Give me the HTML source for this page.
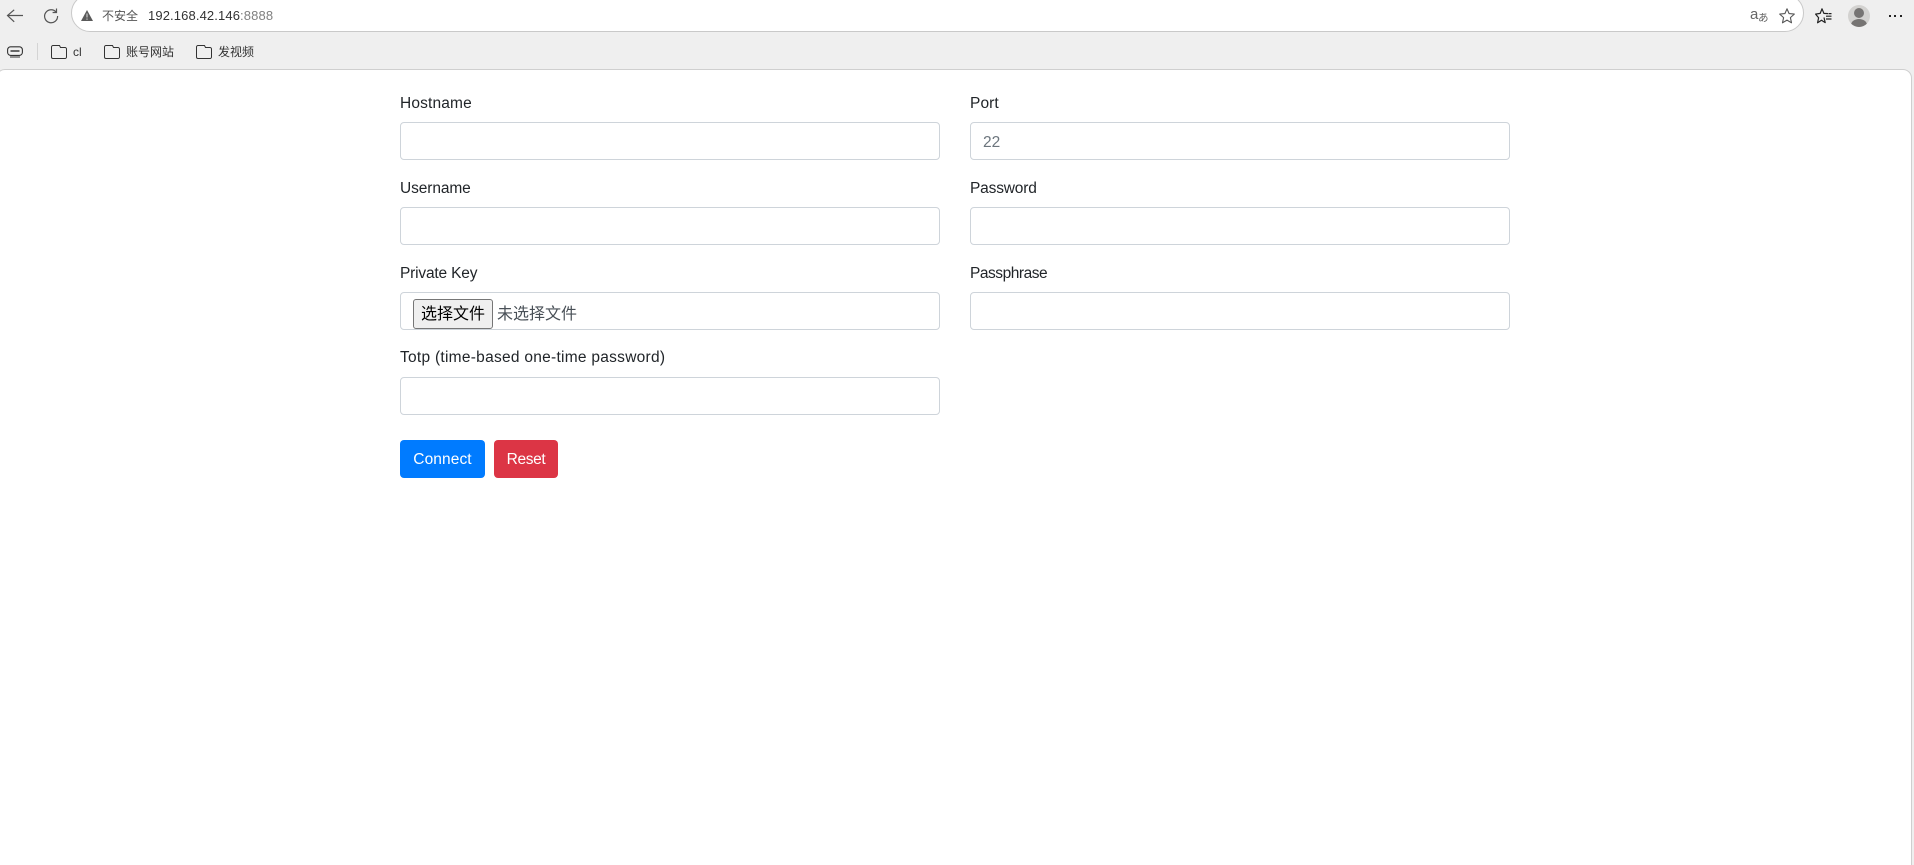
<!DOCTYPE html>
<html lang="zh">
<head>
<meta charset="utf-8">
<title>WebSSH</title>
<style>
html,body{margin:0;padding:0;width:1914px;height:865px;overflow:hidden;background:#efefef;}
body{position:relative;font-family:"Liberation Sans","Noto Sans CJK SC",sans-serif;color:#212529;}
.abs,.lb,.in,.t{position:absolute;}
#pill{position:absolute;left:71px;top:-6px;width:1731px;height:36px;background:#fff;border:1px solid #c9c9c9;border-radius:19px;}
#page{position:absolute;left:-4px;top:69px;width:1914px;height:800px;background:#fff;border:1px solid #cfcfcf;border-radius:9px 9px 0 0;}
.lb{font-size:15.5px;line-height:24px;color:#212529;white-space:nowrap;}
.in{width:538px;height:36px;background:#fff;border:1px solid #ced4da;border-radius:4px;}
.t{white-space:nowrap;color:#333;}
.btn{position:absolute;top:440px;height:38px;border-radius:4px;color:#fff;font-size:15.5px;line-height:39px;text-align:center;}
svg{position:absolute;overflow:visible;}
</style>
</head>
<body>
<div id="pill"></div>
<div id="page"></div>

<!-- back -->
<svg style="left:0;top:-1px" width="30" height="30" viewBox="0 0 30 30" fill="none" stroke="#555" stroke-width="1.2"><path d="M7.5 16.5H23M14.2 10.8L7.5 16.5L14.2 22.8"/></svg>
<!-- reload -->
<svg style="left:43px;top:7px" width="16" height="16" viewBox="0 0 16 16" fill="none" stroke="#555" stroke-width="1.2"><path d="M13.5 1.5V5.5H9.6M13.2 5.2A6.5 6.5 0 1 0 14.6 9"/></svg>
<!-- warning -->
<svg style="left:81px;top:10px" width="12" height="11" viewBox="0 0 12 11"><path d="M6 0L12 11H0Z" fill="#5a5a5a"/><path d="M6 3.5V7.5M6 8.5V9.7" stroke="#dcdcdc" stroke-width="1"/></svg>
<div class="t" style="left:102px;top:8px;font-size:12px;line-height:16px;color:#555">不安全</div>
<div class="t" style="left:148px;top:8px;font-size:13px;line-height:16px;letter-spacing:.12px;color:#333">192.168.42.146<span style="color:#808080">:8888</span></div>

<!-- translate -->
<div class="t" style="left:1750px;top:6px;font-size:15px;line-height:18px;color:#666">a</div>
<div class="t" style="left:1758px;top:11px;font-size:10.5px;line-height:14px;color:#666;font-family:'Noto Sans CJK JP',sans-serif">あ</div>
<!-- star -->
<svg style="left:1779px;top:8px" width="16" height="16" viewBox="0 0 16 16" fill="none" stroke="#555" stroke-width="1.1"><path d="M8 .8L10.1 5.6L15.3 6.1L11.4 9.6L12.5 14.8L8 12.1L3.5 14.8L4.6 9.6L.7 6.1L5.9 5.6Z" stroke-linejoin="round"/></svg>
<!-- favorites -->
<svg style="left:1815px;top:8px" width="17" height="16" viewBox="0 0 17 16" fill="none" stroke="#222" stroke-width="1.2"><path d="M9 9.5L10.2 14.6L6.5 12.2L2.6 14.8L3.6 9.7L.6 6.1L5.2 5.4L7 .8L8.9 5.4L13 5.6" stroke-linejoin="round"/><path d="M11 8.2H16.5M11 11H16.5M13.5 5.6H16.5"/></svg>
<!-- avatar -->
<div class="abs" style="left:1848px;top:5px;width:22px;height:22px;border-radius:50%;background:#d3d2d0;overflow:hidden">
  <div class="abs" style="left:6px;top:3px;width:10px;height:10px;border-radius:50%;background:#767473"></div>
  <div class="abs" style="left:3px;top:14px;width:16px;height:12px;border-radius:50%;background:#767473"></div>
</div>
<!-- more -->
<div class="abs" style="left:1889px;top:15px;width:2px;height:2px;background:#222"></div>
<div class="abs" style="left:1894px;top:15px;width:2px;height:2px;background:#222"></div>
<div class="abs" style="left:1900px;top:15px;width:2px;height:2px;background:#222"></div>

<!-- bookmarks bar -->
<svg style="left:7px;top:46px" width="16" height="12" viewBox="0 0 16 12" fill="none" stroke="#333" stroke-width="1.1"><rect x=".6" y=".8" width="14.8" height="8.6" rx="3"/><path d="M3.5 5H12.5" stroke-width="2" stroke="#666"/><path d="M3 11H13" stroke-width="1"/></svg>
<div class="abs" style="left:37px;top:43px;width:1px;height:17px;background:#d4d4d4"></div>

<svg style="left:51px;top:45px" width="16" height="14" viewBox="0 0 16 14" fill="none" stroke="#333" stroke-width="1"><path d="M.5 2A1.5 1.5 0 0 1 2 .5H8.5L9.5 2.5H14A1.5 1.5 0 0 1 15.5 4V12A1.5 1.5 0 0 1 14 13.5H2A1.5 1.5 0 0 1 .5 12Z"/></svg>
<div class="t" style="left:73px;top:44px;font-size:12px;line-height:16px;">cl</div>
<svg style="left:104px;top:45px" width="16" height="14" viewBox="0 0 16 14" fill="none" stroke="#333" stroke-width="1"><path d="M.5 2A1.5 1.5 0 0 1 2 .5H8.5L9.5 2.5H14A1.5 1.5 0 0 1 15.5 4V12A1.5 1.5 0 0 1 14 13.5H2A1.5 1.5 0 0 1 .5 12Z"/></svg>
<div class="t" style="left:126px;top:44px;font-size:12px;line-height:16px;">账号网站</div>
<svg style="left:196px;top:45px" width="16" height="14" viewBox="0 0 16 14" fill="none" stroke="#333" stroke-width="1"><path d="M.5 2A1.5 1.5 0 0 1 2 .5H8.5L9.5 2.5H14A1.5 1.5 0 0 1 15.5 4V12A1.5 1.5 0 0 1 14 13.5H2A1.5 1.5 0 0 1 .5 12Z"/></svg>
<div class="t" style="left:218px;top:44px;font-size:12px;line-height:16px;">发视频</div>

<!-- form -->
<div class="lb" style="left:400px;top:92px;letter-spacing:.15px">Hostname</div>
<div class="in" style="left:400px;top:122px"></div>
<div class="lb" style="left:970px;top:92px;letter-spacing:.1px">Port</div>
<div class="in" style="left:970px;top:122px"></div>
<div class="t" style="left:983px;top:131px;font-size:15.5px;line-height:24px;color:#6c757d">22</div>

<div class="lb" style="left:400px;top:177px;letter-spacing:-.1px">Username</div>
<div class="in" style="left:400px;top:207px"></div>
<div class="lb" style="left:970px;top:177px;letter-spacing:-.17px">Password</div>
<div class="in" style="left:970px;top:207px"></div>

<div class="lb" style="left:400px;top:262px;letter-spacing:-.18px">Private Key</div>
<div class="in" style="left:400px;top:292px"></div>
<div class="abs" style="left:413px;top:299px;width:78px;height:28px;background:#efefef;border:1px solid #767676;border-radius:3px;color:#000;font-size:16px;line-height:30px;text-align:center">选择文件</div>
<div class="t" style="left:497px;top:303px;font-size:16px;line-height:24px;color:#495057">未选择文件</div>
<div class="lb" style="left:970px;top:262px;letter-spacing:-.47px">Passphrase</div>
<div class="in" style="left:970px;top:292px"></div>

<div class="lb" style="left:400px;top:346px;letter-spacing:.27px">Totp (time-based one-time password)</div>
<div class="in" style="left:400px;top:377px"></div>

<div class="btn" style="left:400px;width:85px;background:#007bff;letter-spacing:.1px">Connect</div>
<div class="btn" style="left:494px;width:64px;background:#dc3545;letter-spacing:-.35px">Reset</div>
</body>
</html>
